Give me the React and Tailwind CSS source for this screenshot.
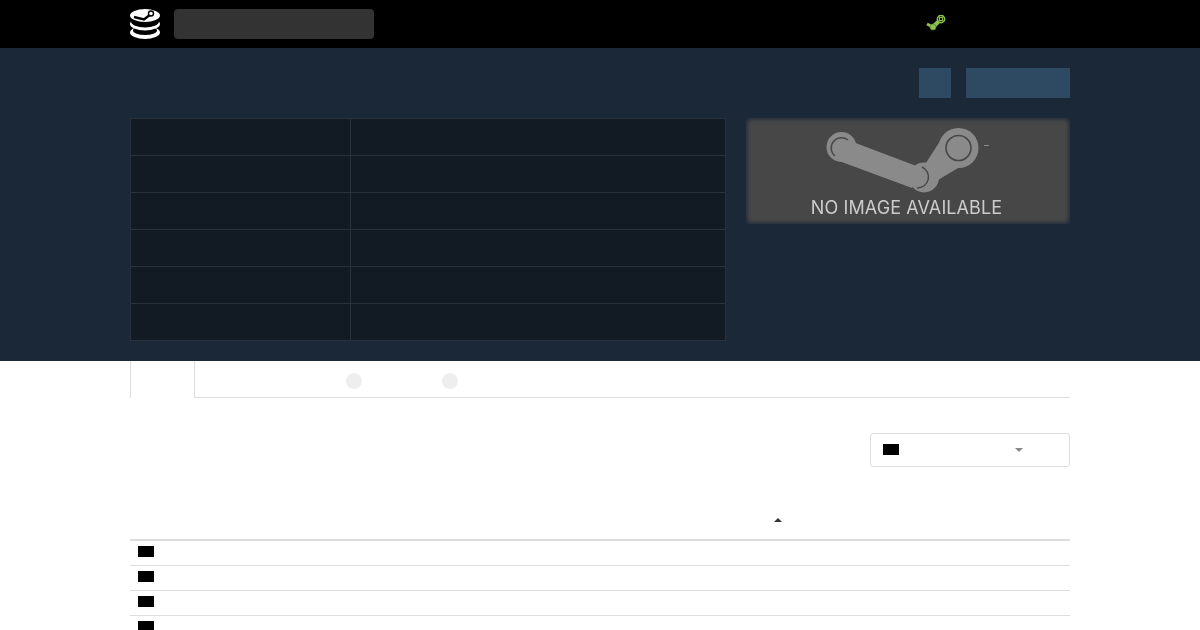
const Caret = ({ className }) => (
  <span className={`block w-0 h-0 border-x-4 border-x-transparent border-b-4 ${className}`} />
);

const SteamMark = () => (
  <svg viewBox="0 0 324 106" className="absolute inset-0 w-full h-full blur-[0.5px]">
    <g fill="#8a8a8a" stroke="none">
      <circle cx="95.5" cy="29" r="15" />
      <circle cx="178" cy="59.5" r="15" />
      <circle cx="212.5" cy="30" r="20" />
      <path d="M107 24 L173 49 L166 70 L93 43 Z" />
      <path d="M178 48 L196 20 L229 40 L192 62 Z" />
    </g>
    <g fill="none" stroke="#474747">
      <circle cx="212.5" cy="30" r="12.5" strokeWidth="1.6" />
      <path d="M102 22 A10 10 0 1 0 89 38" strokeWidth="1.4" />
      <path d="M176 49 A11 11 0 0 1 171 70" strokeWidth="1.4" />
    </g>
    <rect x="238" y="27" width="5" height="1" fill="#8a8a8a" />
  </svg>
);

const Logo = () => (
  <svg viewBox="0 0 30 30" className="w-[30px] h-[30px]">
    <ellipse cx="15" cy="23.5" rx="15" ry="6.5" fill="#fff" />
    <ellipse cx="15" cy="21.5" rx="12" ry="4.5" fill="#000" />
    <ellipse cx="15" cy="15" rx="15" ry="6.5" fill="#fff" />
    <ellipse cx="15" cy="12.5" rx="14" ry="6" fill="#000" />
    <ellipse cx="15" cy="6.5" rx="15" ry="6.5" fill="#fff" />
    <g stroke="#000" fill="none">
      <path d="M4 8 L14 10.5 L21 5" strokeWidth="2.4" />
      <circle cx="21" cy="4.5" r="2.5" fill="#fff" strokeWidth="1.4" />
    </g>
  </svg>
);

const GreenSteam = () => (
  <svg viewBox="0 0 20 16" className="w-5 h-4">
    <g stroke="#8cc24f" fill="none">
      <path d="M1 9 L7 12" strokeWidth="3" />
      <path d="M7 12 L13 6" strokeWidth="4" />
      <circle cx="15" cy="4" r="3.6" fill="#000" strokeWidth="1.6" />
      <rect x="13.5" y="2.5" width="3" height="3" strokeWidth="1" />
      <circle cx="7" cy="12" r="3" fill="#8cc24f" stroke="#5f8a33" strokeWidth="0.8" />
    </g>
  </svg>
);

export default function App() {
  const rows = [0, 1, 2, 3, 4, 5];

  return (
    <div className="h-[630px] overflow-hidden bg-white font-['Liberation_Sans',sans-serif]">
      {/* Top bar */}
      <div className="h-12 bg-black">
        <div className="w-[940px] mx-auto h-full flex items-center">
          <Logo />
          <div className="ml-[14px] w-[200px] h-[30px] rounded-sm bg-[#333333]" />
          <div className="ml-[552px] mt-[-3px]">
            <GreenSteam />
          </div>
        </div>
      </div>

      {/* Hero */}
      <div className="bg-[#1b2838] pt-5 pb-5">
        <div className="w-[940px] mx-auto">
          <div className="flex justify-end gap-[15px]">
            <div className="w-8 h-[30px] bg-[#2e4a63]" />
            <div className="w-[104px] h-[30px] bg-[#2e4a63]" />
          </div>

          <div className="mt-5 flex gap-5">
            <div className="w-[596px] h-[223px] bg-[#121a23] border-x border-t border-[#29323c]">
              {rows.map((r) => (
                <div key={r} className="h-[37px] flex border-b border-[#29323c]">
                  <div className="w-[220px] h-full border-r border-[#29323c]" />
                  <div className="flex-1" />
                </div>
              ))}
            </div>

            <div className="relative w-[324px] h-[106px] bg-[#474747] rounded-sm shadow-[inset_0_0_4px_1px_#1b2838]">
              <SteamMark />
              <div className="absolute left-0 right-0 top-[80px] pr-[3px] text-center text-[18px] leading-5 tracking-[0.1px] font-['Inter',sans-serif] text-[#cccccc] blur-[0.4px]">
                NO IMAGE AVAILABLE
              </div>
            </div>
          </div>
        </div>
      </div>

      <div className="w-[940px] mx-auto">
        {/* Tabs */}
        <div className="h-[37px] flex">
          <div className="w-[65px] border-x border-[#dddddd]" />
          <div className="flex-1 flex items-center gap-20 pl-[151px] pt-1 border-b border-[#dddddd]">
            <span className="w-4 h-4 rounded-full bg-[#eeeeee]" />
            <span className="w-4 h-4 rounded-full bg-[#eeeeee]" />
          </div>
        </div>

        {/* Filter select */}
        <div className="mt-[35px] flex justify-end">
          <div className="w-[200px] h-[34px] flex items-center pl-3 pb-[2px] border border-[#dddddd] rounded-[3px]">
            <div className="w-4 h-[11px] bg-black" />
            <Caret className="ml-[116px] mt-[2px] rotate-180 border-b-[#888888]" />
          </div>
        </div>

        {/* Results table */}
        <div className="h-[74px] pt-[51px] pl-[644px] border-b-2 border-[#dddddd]">
          <Caret className="border-b-[#333333]" />
        </div>
        {rows.map((r) => (
          <div key={r} className="h-[25px] pl-2 pt-[5px] border-b border-[#dddddd]">
            <div className="w-4 h-[11px] bg-black" />
          </div>
        ))}
      </div>
    </div>
  );
}
